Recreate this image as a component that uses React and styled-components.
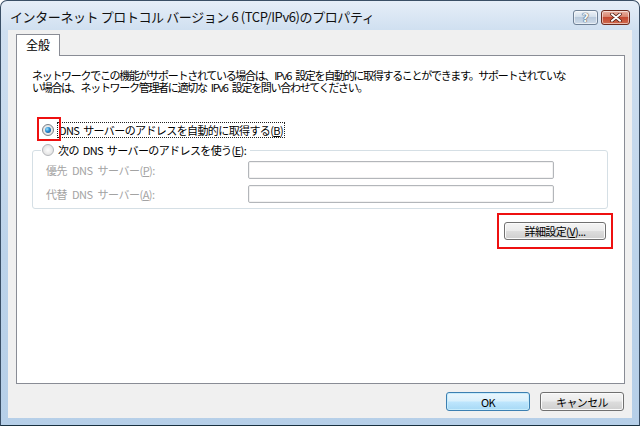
import React from "react";
import styled, { createGlobalStyle } from "styled-components";

const Global = createGlobalStyle`
  html, body { margin: 0; padding: 0; width: 640px; height: 426px; overflow: hidden; background: #fff; }
  body { font-family: "Noto Sans CJK JP", "Noto Sans", sans-serif; }
  * { box-sizing: border-box; }
`;

const Window = styled.div`
  width: 640px;
  height: 426px;
  display: flex;
  flex-direction: column;
  background: linear-gradient(to bottom, #e6eef8 0px, #cfdff0 30px, #bcd3ea 60%, #b6cfe8 100%);
  border: 1px solid #3a4f66;
  border-bottom-color: #18303f;
  border-radius: 7px 7px 0 0;
  padding: 0 7px 7px 7px;
`;

const TitleBar = styled.div`
  height: 29px;
  display: flex;
  align-items: flex-start;
  justify-content: space-between;
`;

const Title = styled.div`
  padding: 7px 0 0 2px;
  font-size: 13px;
  line-height: 17px;
  letter-spacing: -0.4px;
  color: #111;
  white-space: nowrap;
`;

const Caption = styled.div`
  display: flex;
  gap: 3px;
  margin: 9px 2px 0 0;
`;

const CapButton = styled.div`
  height: 15px;
  width: ${(p) => p.$w}px;
  border: 1px solid ${(p) => (p.$close ? "#6b2a1e" : "#6f8196")};
  border-radius: 3px;
  display: flex;
  align-items: center;
  justify-content: center;
  background: ${(p) =>
    p.$close
      ? "linear-gradient(to bottom, #eab3a3 0%, #d8846e 45%, #c54a32 50%, #cf6a4e 100%)"
      : "linear-gradient(to bottom, #eef3f8 0%, #d3dfeb 45%, #b9cadc 50%, #cfdcea 100%)"};
  box-shadow: inset 0 0 0 1px rgba(255, 255, 255, 0.55);
  font-size: 12px;
  font-weight: bold;
  color: #f4f6f8;
  text-shadow: 0 0 1px #2b3a4a, 0 0 1px #2b3a4a;
  font-family: "DejaVu Sans", sans-serif;
`;

const Client = styled.div`
  flex: 1;
  display: flex;
  flex-direction: column;
  background: #f0f0f0;
  padding: 4px 7px 0 8px;
`;

const TabStrip = styled.div`
  display: flex;
  position: relative;
  z-index: 1;
`;

const Tab = styled.div`
  height: 22px;
  margin-bottom: -1px;
  padding: 2px 9px 0;
  background: #fff;
  border: 1px solid #898c95;
  border-bottom: none;
  font-size: 12px;
  line-height: 16px;
  color: #000;
`;

const Panel = styled.div`
  flex: 1;
  background: #fff;
  border: 1px solid #898c95;
  padding: 13px 16px 0 15px;
  display: flex;
  flex-direction: column;
`;

const Description = styled.p`
  margin: 0;
  font-size: 11px;
  line-height: 12px;
  letter-spacing: -1.3px;
  word-spacing: 3px;
  white-space: nowrap;
  color: #000;
`;

const RadioRow = styled.div`
  display: flex;
  align-items: center;
  height: 16px;
  margin-top: ${(p) => p.$mt || 0}px;
  padding-left: ${(p) => p.$pl || 0}px;
`;

const RadioWrap = styled.span`
  position: relative;
  display: inline-flex;
  width: 12px;
  height: 12px;
  flex: none;
`;

const Radio = styled.span`
  width: 12px;
  height: 12px;
  border-radius: 50%;
  border: 1px solid ${(p) => (p.$checked ? "#7b8189" : "#b4b7bb")};
  background: radial-gradient(circle at 50% 50%, #fdfdfd 0%, #e4e4e4 70%, #d4d4d4 100%);
  display: flex;
  align-items: center;
  justify-content: center;
  &::after {
    content: "";
    display: ${(p) => (p.$checked ? "block" : "none")};
    width: 6px;
    height: 6px;
    border-radius: 50%;
    background: radial-gradient(circle at 35% 35%, #9be2ff 0%, #2a8bd0 45%, #0d3f7a 100%);
  }
`;

const Highlight = styled.span`
  position: absolute;
  top: ${(p) => p.$t}px;
  left: ${(p) => p.$l}px;
  right: ${(p) => p.$r}px;
  bottom: ${(p) => p.$b}px;
  border: 2px solid #ee1010;
  pointer-events: none;
`;

const RadioLabel = styled.span`
  margin-left: ${(p) => p.$ml || 4}px;
  padding: 0 1px;
  line-height: 14px;
  font-size: 11px;
  letter-spacing: -0.6px;
  word-spacing: 2px;
  color: #000;
  white-space: nowrap;
  border: 1px ${(p) => (p.$focus ? "dotted #222" : "solid transparent")};
`;

const Group = styled.fieldset`
  margin: 4px 0 0 0;
  padding: 3px 0 5px 13px;
  border: 1px solid #d5dfe5;
  border-radius: 3px;
  display: flex;
  flex-direction: column;
  gap: 6px;
`;

const Legend = styled.legend`
  margin-left: -5px;
  padding: 0 2px 0 1px;
  background: #fff;
`;

const FieldRow = styled.div`
  display: flex;
  align-items: center;
  height: 18px;
`;

const FieldLabel = styled.span`
  width: 202px;
  font-size: 11px;
  letter-spacing: -0.5px;
  word-spacing: 3px;
  color: #a3a3a3;
  white-space: nowrap;
`;

const TextBox = styled.div`
  width: 306px;
  height: 18px;
  border: 1px solid #b3b6ba;
  border-radius: 2px;
  background: #fff;
  box-shadow: inset 0 0 0 1px #f2f2f2;
`;

const ActionRow = styled.div`
  display: flex;
  justify-content: flex-end;
  margin-top: 13px;
  padding-right: 2px;
`;

const ButtonWrap = styled.span`
  position: relative;
  display: inline-flex;
`;

const Button = styled.button`
  width: ${(p) => p.$w}px;
  height: 18px;
  padding: 0;
  border: 1px solid ${(p) => (p.$default ? "#3c7fb1" : "#707070")};
  border-radius: 3px;
  background: ${(p) =>
    p.$default
      ? "linear-gradient(to bottom, #eaf6fd 0%, #d9f0fc 48%, #bee6fd 52%, #a7d9f5 100%)"
      : "linear-gradient(to bottom, #f4f4f4 0%, #ebebeb 48%, #dddddd 52%, #cfcfcf 100%)"};
  box-shadow: inset 0 0 0 1px ${(p) => (p.$default ? "#c7ecfc" : "#fbfbfb")};
  font-family: "Noto Sans CJK JP", "Noto Sans", sans-serif;
  font-size: 11px;
  letter-spacing: -0.6px;
  line-height: 14px;
  color: #000;
`;

const Footer = styled.div`
  display: flex;
  justify-content: flex-end;
  gap: 10px;
  padding: 8px 1px 7px 0;
`;

const FooterButton = styled(Button)`
  height: 19px;
`;

export default function App() {
  return (
    <>
      <Global />
      <Window>
        <TitleBar>
          <Title>インターネット プロトコル バージョン 6 (TCP/IPv6)のプロパティ</Title>
          <Caption>
            <CapButton $w={25}>?</CapButton>
            <CapButton $w={29} $close>
              <svg width="12" height="9" viewBox="0 0 12 9">
                <path d="M2 1.2 L10 7.8 M10 1.2 L2 7.8" stroke="#4a1a10" strokeWidth="3.4" strokeLinecap="round" />
                <path d="M2 1.2 L10 7.8 M10 1.2 L2 7.8" stroke="#ffffff" strokeWidth="2" strokeLinecap="round" />
              </svg>
            </CapButton>
          </Caption>
        </TitleBar>
        <Client>
          <TabStrip>
            <Tab>全般</Tab>
          </TabStrip>
          <Panel>
            <Description>
              ネットワークでこの機能がサポートされている場合は、IPv6 設定を自動的に取得することができます。サポートされていな
              <br />
              い場合は、ネットワーク管理者に適切な IPv6 設定を問い合わせてください。
            </Description>
            <RadioRow $mt={29} $pl={10}>
              <RadioWrap>
                <Radio $checked />
                <Highlight $t={-7} $l={-5} $r={-7} $b={-5} />
              </RadioWrap>
              <RadioLabel $focus $ml={3}>
                DNS サーバーのアドレスを自動的に取得する(<u>B</u>)
              </RadioLabel>
            </RadioRow>
            <Group>
              <Legend>
                <RadioRow>
                  <RadioWrap>
                    <Radio />
                  </RadioWrap>
                  <RadioLabel $ml={2}>
                    次の DNS サーバーのアドレスを使う(<u>E</u>):
                  </RadioLabel>
                </RadioRow>
              </Legend>
              <FieldRow>
                <FieldLabel>
                  優先 DNS サーバー(<u>P</u>):
                </FieldLabel>
                <TextBox />
              </FieldRow>
              <FieldRow>
                <FieldLabel>
                  代替 DNS サーバー(<u>A</u>):
                </FieldLabel>
                <TextBox />
              </FieldRow>
            </Group>
            <ActionRow>
              <ButtonWrap>
                <Button $w={102}>
                  詳細設定(<u>V</u>)...
                </Button>
                <Highlight $t={-9} $l={-7} $r={-7} $b={-9} />
              </ButtonWrap>
            </ActionRow>
          </Panel>
          <Footer>
            <FooterButton $w={84} $default>
              OK
            </FooterButton>
            <FooterButton $w={84}>キャンセル</FooterButton>
          </Footer>
        </Client>
      </Window>
    </>
  );
}
